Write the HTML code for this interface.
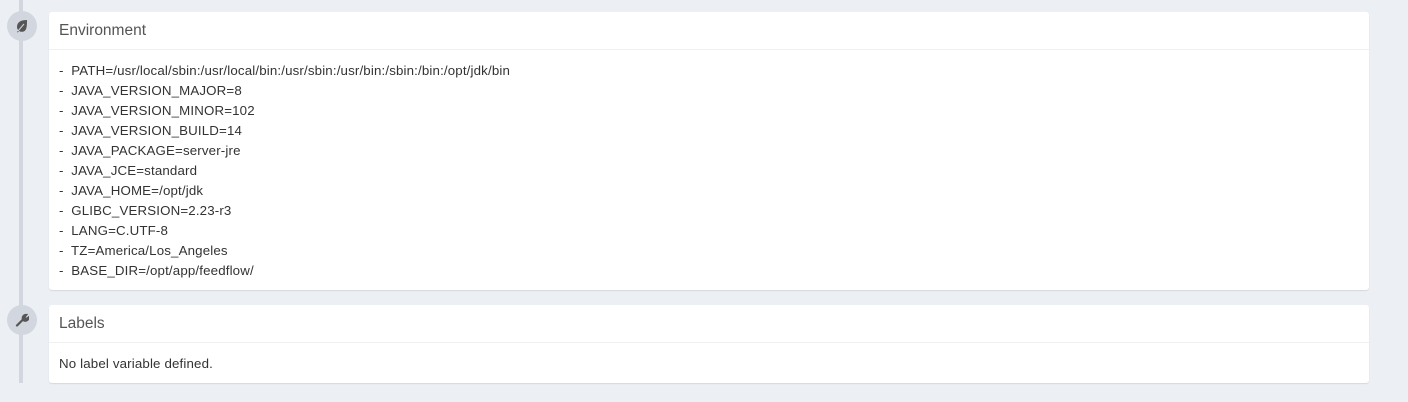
<!DOCTYPE html>
<html><head><style>
body{margin:0;width:1408px;height:402px;background:#ecf0f5;font-family:"Liberation Sans",sans-serif;position:relative;overflow:hidden;color:#333}
.line{position:absolute;left:19px;top:0;width:4px;height:383px;background:#d2d6de}
.ic{position:absolute;left:7px;width:30px;height:30px;border-radius:50%;background:#d2d6de;display:flex;align-items:center;justify-content:center}
.card{position:absolute;left:49px;width:1320px;background:#fff;border-radius:3px;box-shadow:0 1px 1px rgba(0,0,0,.1)}
.hd{height:37px;border-bottom:1px solid #f0f0f0;font-size:15.5px;line-height:38px;padding-left:10px;color:#555}
.bd{padding:11px 10px 9px;font-size:13.3px;line-height:20px;color:#333;letter-spacing:.15px}
</style></head><body>
<div class="line"></div>
<div class="ic" style="top:11px"><svg width="14" height="14" viewBox="0 0 14 14"><path d="M12 1C6 1 2 3 2 8c0 1.5.7 2.7 1.5 3.3L2 13l.6.5L4.2 12c.7.5 1.6.8 2.8.8 5 0 5-6 5-11.8z" fill="#555"/><path d="M3 12L9 5" stroke="#d2d6de" stroke-width="1"/></svg></div>
<div class="ic" style="top:305px"><svg width="14" height="14" viewBox="0 0 14 14"><path d="M2 12.5l6-6M8 6.5c-.8-2 .5-4.5 3-4.5l-1.5 2 .5 1.5 1.5.5 2-1.5c0 2.5-2.5 3.8-4.5 3" stroke="#555" stroke-width="2.2" fill="none" stroke-linecap="round"/></svg></div>
<div class="card" style="top:12px;height:278px"><div class="hd">Environment</div><div class="bd">
-&nbsp; PATH=/usr/local/sbin:/usr/local/bin:/usr/sbin:/usr/bin:/sbin:/bin:/opt/jdk/bin<br>
-&nbsp; JAVA_VERSION_MAJOR=8<br>
-&nbsp; JAVA_VERSION_MINOR=102<br>
-&nbsp; JAVA_VERSION_BUILD=14<br>
-&nbsp; JAVA_PACKAGE=server-jre<br>
-&nbsp; JAVA_JCE=standard<br>
-&nbsp; JAVA_HOME=/opt/jdk<br>
-&nbsp; GLIBC_VERSION=2.23-r3<br>
-&nbsp; LANG=C.UTF-8<br>
-&nbsp; TZ=America/Los_Angeles<br>
-&nbsp; BASE_DIR=/opt/app/feedflow/
</div></div>
<div class="card" style="top:305px;height:78px"><div class="hd">Labels</div><div class="bd">No label variable defined.</div></div>
</body></html>
